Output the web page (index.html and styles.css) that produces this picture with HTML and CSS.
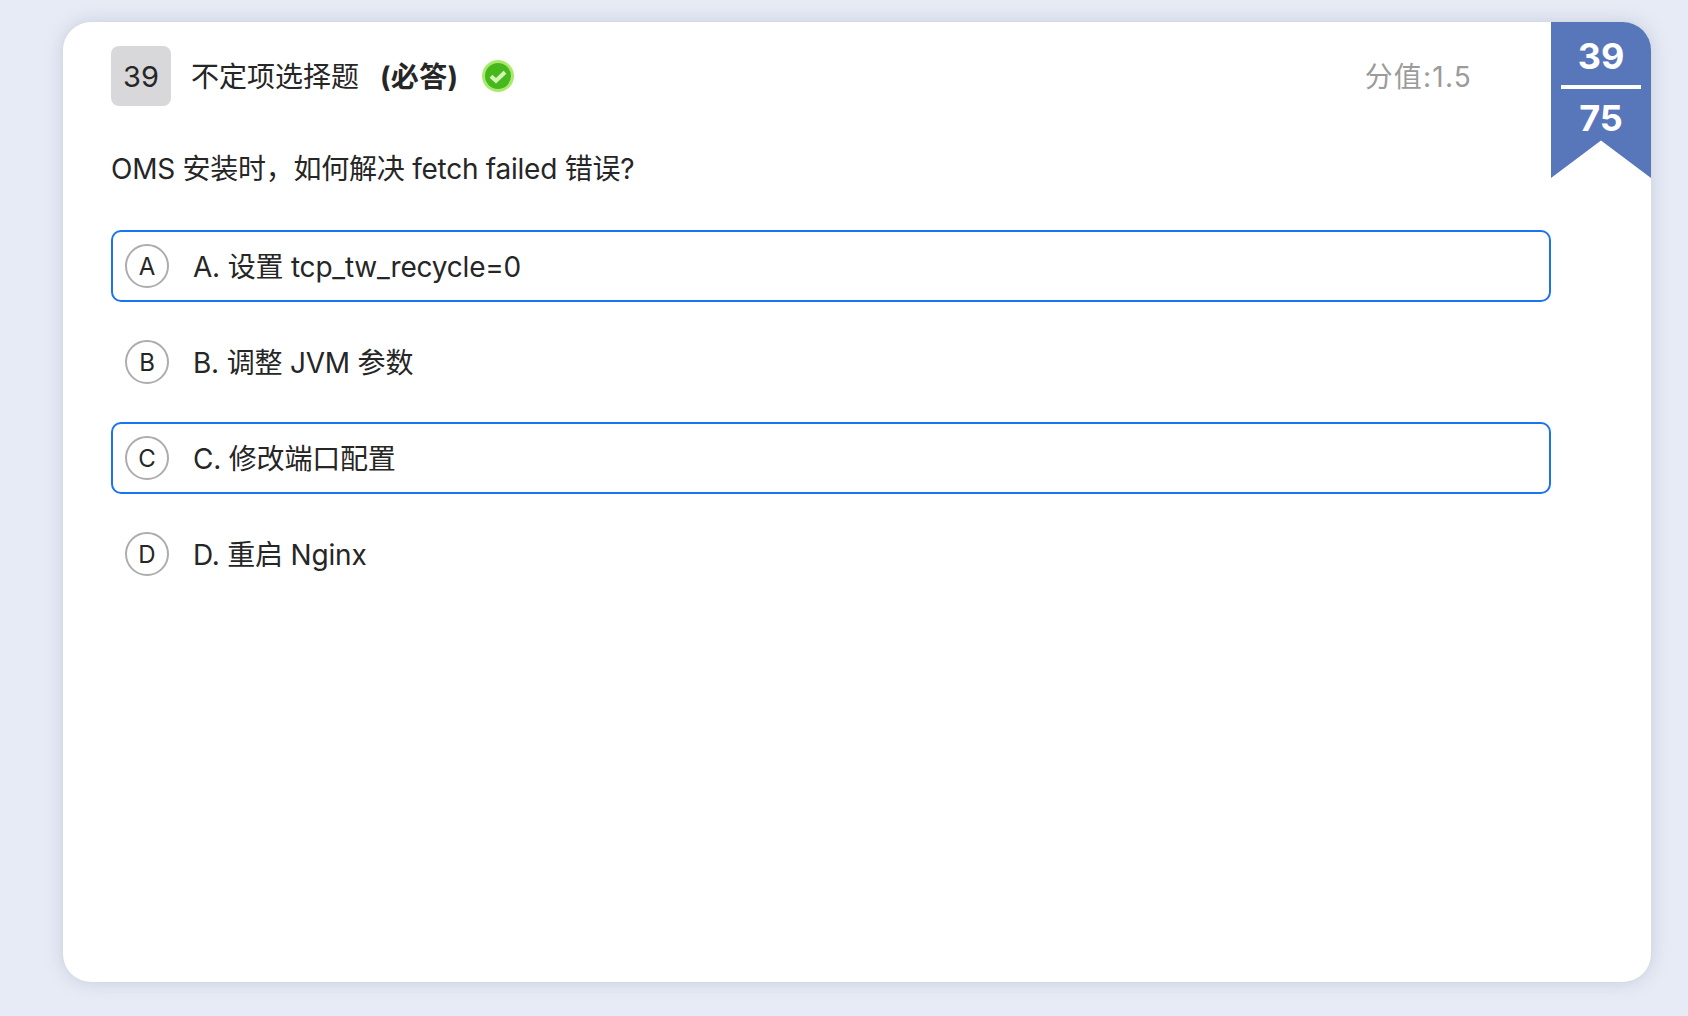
FILE: index.html
```html
<!DOCTYPE html>
<html lang="zh-CN">
<head>
<meta charset="utf-8">
<title>Quiz</title>
<link rel="stylesheet" href="styles.css">
</head>
<body>
<main class="card">
  <header class="head">
    <span class="num">39</span>
    <span class="type">不定项选择题</span>
    <strong class="req">(必答)</strong>
    <svg class="ok" width="32" height="32" viewBox="0 0 32 32" aria-hidden="true">
      <circle cx="16" cy="16" r="16" fill="#a9ea6e"/>
      <circle cx="16" cy="16" r="13" fill="#46b81e"/>
      <path d="M9 16.2l5 4.6 9-8.6" fill="none" stroke="#d3f5b4" stroke-width="4"/>
    </svg>
    <span class="score">分值:1.5</span>
  </header>
  <p class="question">OMS 安装时，如何解决 fetch failed 错误?</p>
  <ul class="options">
    <li class="option selected"><span class="letter">A</span><span class="label">A. 设置 tcp_tw_recycle=0</span></li>
    <li class="option"><span class="letter">B</span><span class="label">B. 调整 JVM 参数</span></li>
    <li class="option selected"><span class="letter">C</span><span class="label">C. 修改端口配置</span></li>
    <li class="option"><span class="letter">D</span><span class="label">D. 重启 Nginx</span></li>
  </ul>
  <aside class="ribbon">
    <span class="r-top">39</span>
    <span class="r-line"></span>
    <span class="r-bottom">75</span>
  </aside>
</main>
</body>
</html>
```
FILE: styles.css
```css
* { box-sizing: border-box; }
html, body { height: 100%; }
body {
  margin: 0;
  padding: 22px 37px 34px 63px;
  background: #e7ebf5;
  font-family: Inter, "Noto Sans CJK SC", sans-serif;
  color: #262626;
}
.card {
  position: relative;
  height: 960px;
  padding: 24px 100px 0 48px;
  background: #fff;
  border-radius: 28px;
  box-shadow: 0 0 1px 1px #d9dce2, 0 0 18px rgba(120, 135, 175, .3);
  overflow: hidden;
}
.head { display: flex; align-items: center; height: 60px; font-size: 28px; }
.num {
  display: flex; align-items: center; justify-content: center;
  width: 60px; height: 60px; margin-right: 20px;
  background: #d8d8da; border-radius: 8px;
  font-size: 29px;
}
.type { margin-right: 21px; padding-bottom: 2px; }
.req { font-weight: 700; margin-right: 23px; padding-bottom: 2px; letter-spacing: .3px; }
.ok { flex: none; margin-left: 1px; }
.score { margin-left: auto; margin-right: 79px; color: #9b9b9b; font-size: 28px; letter-spacing: 1.2px; padding-bottom: 2px; }
.question { margin: 43px 0 0; font-size: 28px; line-height: 40px; letter-spacing: -.25px; }
.options { list-style: none; margin: 41px 0 0; padding: 0; display: flex; flex-direction: column; gap: 24px; }
.option {
  display: flex; align-items: center; gap: 24px;
  height: 72px; padding: 0 12px;
  border: 2px solid transparent; border-radius: 10px;
  font-size: 28px;
}
.option.selected { border-color: #1a73f0; }
.label { letter-spacing: -.2px; padding-bottom: 2px; }
.letter {
  display: flex; align-items: center; justify-content: center;
  flex: none; width: 44px; height: 44px;
  border: 2px solid #adadad; border-radius: 50%;
  font-size: 24px;
}
.ribbon {
  position: absolute; top: 0; right: 0;
  width: 100px; height: 156px;
  padding-top: 12px;
  display: flex; flex-direction: column; align-items: center;
  background: #5877bb;
  color: #fff; font-weight: 700; font-size: 36px; line-height: 44px;
  clip-path: polygon(0 0, 100% 0, 100% 100%, 50% 76%, 0 100%);
}
.r-line { width: 80px; height: 4px; margin: 7px 0 7px; background: #fff; flex: none; }
```
